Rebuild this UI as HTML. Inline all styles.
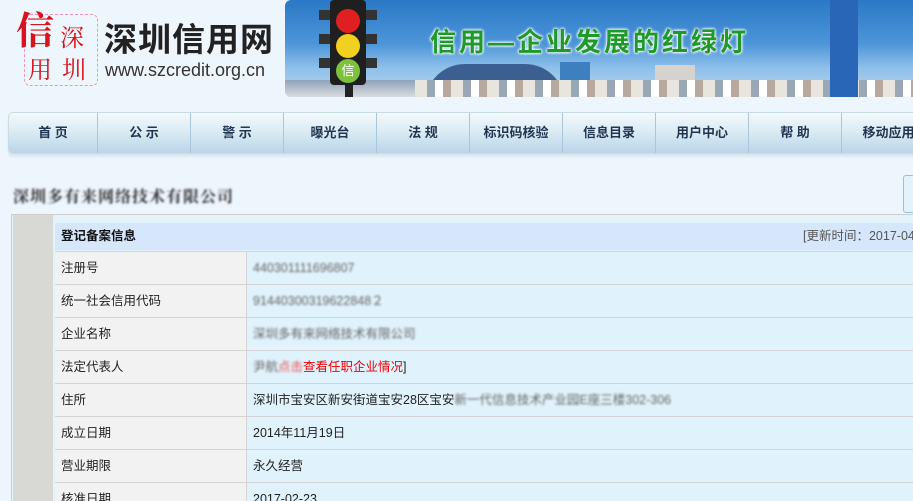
<!DOCTYPE html>
<html><head><meta charset="utf-8"><style>
*{margin:0;padding:0;box-sizing:border-box}
html,body{width:913px;height:501px;overflow:hidden}
body{background:#eef6fd;font-family:"Liberation Sans","Noto Sans CJK SC",sans-serif;position:relative}
.abs{position:absolute}
.nav{left:8px;top:112px;width:920px;height:42px;border-radius:5px;background:linear-gradient(#f4f9fc 0%,#dcebf4 45%,#b9d6e8 100%);border:1px solid #c7dbe8;box-shadow:0 3px 2px #dde6ec}
.nav div{position:absolute;top:0;height:40px;width:93px;line-height:40px;text-align:center;font-size:13px;font-weight:bold;color:#1f3550;border-right:1px solid #a8c6dc;white-space:nowrap}
.row{position:absolute;left:55px;width:858px;height:33px;border-top:1px solid #d3d3d3}
.row .l{position:absolute;left:0;top:0;width:192px;height:32px;background:#f2f2f2;border-right:1px solid #d3d3d3;line-height:32px;padding-left:6px;font-size:12.5px;color:#222}
.row .v{position:absolute;left:192px;top:0;right:0;height:32px;background:#e0f2fc;line-height:32px;padding-left:6px;font-size:12.5px;color:#222;white-space:nowrap}
.bl{filter:blur(1px);color:#666}
</style></head><body>
<div class="abs" style="left:16px;top:0px;font-size:38px;color:#d8141b;font-family:'Noto Serif CJK SC',serif;font-weight:bold">信</div>
<div class="abs" style="left:24px;top:14px;width:74px;height:72px;border:1px dashed #e05;border-radius:6px;opacity:.4"></div>
<div class="abs" style="left:60px;top:18px;font-size:24px;color:#d8141b;font-family:'Noto Serif CJK SC',serif">深</div>
<div class="abs" style="left:28px;top:50px;font-size:24px;color:#d8141b;font-family:'Noto Serif CJK SC',serif">用</div>
<div class="abs" style="left:62px;top:50px;font-size:24px;color:#d8141b;font-family:'Noto Serif CJK SC',serif">圳</div>
<div class="abs" style="left:104px;top:20px;font-size:33px;color:#222;letter-spacing:1px;line-height:40px;font-weight:bold">深圳信用网</div>
<div class="abs" style="left:105px;top:60px;font-size:18px;color:#333">www.szcredit.org.cn</div>
<div class="abs" style="left:285px;top:0;width:628px;height:97px;background:linear-gradient(#2a78c6 0%,#4c95d8 45%,#8fc0ea 70%,#b9d6ec 100%);border-radius:6px 0 0 6px;overflow:hidden">
 <div class="abs" style="left:140px;top:64px;width:140px;height:40px;background:#3a5f90;border-radius:70px 70px 0 0"></div>
 <div class="abs" style="left:0;top:80px;width:628px;height:17px;background:linear-gradient(#8fa3b8,#d8dcdf)"></div>
 <div class="abs" style="left:370px;top:65px;width:40px;height:32px;background:#d6d3cf"></div>
 <div class="abs" style="left:275px;top:62px;width:30px;height:35px;background:#3e7fbf"></div>
 <div class="abs" style="left:130px;top:80px;width:500px;height:17px;background:repeating-linear-gradient(90deg,#e8e4de 0 12px,#9aa7b4 12px 20px,#fff 20px 28px,#b7a9a0 28px 36px)"></div>
 <div class="abs" style="left:545px;top:0;width:28px;height:97px;background:#2a66b7"></div>
 <div class="abs" style="left:34px;top:10px;width:58px;height:70px;background:repeating-linear-gradient(#333 0 10px,transparent 10px 24px)"></div>
 <div class="abs" style="left:45px;top:0;width:36px;height:85px;background:#1f1f1f;border-radius:4px"></div>
 <div class="abs" style="left:51px;top:9px;width:24px;height:24px;border-radius:50%;background:#e02020"></div>
 <div class="abs" style="left:51px;top:34px;width:24px;height:24px;border-radius:50%;background:#f2d020"></div>
 <div class="abs" style="left:51px;top:59px;width:24px;height:24px;border-radius:50%;background:#7cc23c;font-size:13px;text-align:center;line-height:24px;color:#fff">信</div>
 <div class="abs" style="left:60px;top:85px;width:8px;height:12px;background:#222"></div>
 <div class="abs" style="left:145px;top:22px;font-size:26px;font-weight:bold;color:#1f9a2a;letter-spacing:3px;text-shadow:0 0 3px #fff,0 0 3px #fff,0 0 2px #fff">信用—企业发展的红绿灯</div>
</div>
<div class="abs nav">
<div style="left:0;width:89px">首 页</div><div style="left:89px">公 示</div><div style="left:182px">警 示</div><div style="left:275px">曝光台</div><div style="left:368px">法 规</div><div style="left:461px">标识码核验</div><div style="left:554px">信息目录</div><div style="left:647px">用户中心</div><div style="left:740px">帮 助</div><div style="left:833px;border:none">移动应用</div>
</div>
<div class="abs bl" style="left:13px;top:184px;font-size:16px;font-weight:bold;color:#333;letter-spacing:1px;font-family:'Noto Serif CJK SC',serif">深圳多有来网络技术有限公司</div>
<div class="abs" style="left:903px;top:175px;width:12px;height:38px;border:1px solid #8cc3ea;background:#e4f2fc;border-radius:3px"></div>
<div class="abs" style="left:11px;top:214px;width:910px;height:300px;border:1px solid #cdcdcd;background:#e3f3fc"></div>
<div class="abs" style="left:13px;top:215px;width:40px;height:290px;background:#d8d9d5"></div>
<div class="abs" style="left:55px;top:223px;width:858px;height:27px;background:#d6e6fb;font-size:12.5px;font-weight:bold;line-height:27px;padding-left:6px;color:#111;white-space:nowrap;overflow:hidden">登记备案信息<span style="position:absolute;left:748px;font-weight:normal;color:#555">[更新时间：2017-04</span></div>
<div class="row" style="top:251px"><div class="l">注册号</div><div class="v"><span class="bl">440301111696807</span></div></div>
<div class="row" style="top:284px"><div class="l">统一社会信用代码</div><div class="v"><span class="bl">91440300319622848２</span></div></div>
<div class="row" style="top:317px"><div class="l">企业名称</div><div class="v"><span class="bl">深圳多有来网络技术有限公司</span></div></div>
<div class="row" style="top:350px"><div class="l">法定代表人</div><div class="v"><span class="bl">尹航</span><span style="color:#e00"><span class="bl" style="color:#e55">点击</span>查看任职企业情况</span>]</div></div>
<div class="row" style="top:383px"><div class="l">住所</div><div class="v">深圳市宝安区新安街道宝安28区宝安<span class="bl">新一代信息技术产业园E座三楼302-306</span></div></div>
<div class="row" style="top:416px"><div class="l">成立日期</div><div class="v">2014年11月19日</div></div>
<div class="row" style="top:449px"><div class="l">营业期限</div><div class="v">永久经营</div></div>
<div class="row" style="top:482px"><div class="l">核准日期</div><div class="v">2017-02-23</div></div>
</body></html>
